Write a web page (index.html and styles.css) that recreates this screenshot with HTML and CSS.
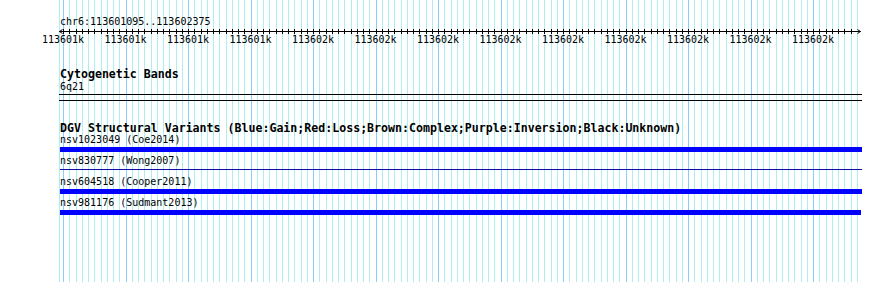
FILE: index.html
```html
<!DOCTYPE html>
<html>
<head>
<meta charset="utf-8">
<link rel="stylesheet" href="styles.css">
</head>
<body>
<div class="view">
  <div class="ruler-title">chr6:113601095..113602375</div>
  <div class="ruler">
    <svg class="arrow" width="4" height="6" viewBox="0 0 4 6"><path d="M3.5 1.5 L0.5 3.5 L3.5 5.5 M0 3.5 H4" /></svg>
    <div class="ruler-body"></div>
    <svg class="arrow" width="4" height="6" viewBox="0 0 4 6"><path d="M0 3.5 H3.5 M0.5 1.5 L3.5 3.5 L0.5 5.5" /></svg>
  </div>
  <div class="ruler-labels">
    <span>113601k</span><span>113601k</span><span>113601k</span><span>113601k</span><span>113602k</span><span>113602k</span><span>113602k</span><span>113602k</span><span>113602k</span><span>113602k</span><span>113602k</span><span>113602k</span><span>113602k</span>
  </div>

  <div class="track-title">Cytogenetic Bands</div>
  <div class="label">6q21</div>
  <div class="cytoband"></div>

  <div class="track-title dgv">DGV Structural Variants (Blue:Gain;Red:Loss;Brown:Complex;Purple:Inversion;Black:Unknown)</div>
  <div class="feature">
    <div class="label">nsv1023049 (Coe2014)</div>
    <div class="bar" style="width:802px"></div>
  </div>
  <div class="feature">
    <div class="label">nsv830777 (Wong2007)</div>
    <div class="bar thin" style="width:802px"></div>
  </div>
  <div class="feature">
    <div class="label">nsv604518 (Cooper2011)</div>
    <div class="bar" style="width:802px"></div>
  </div>
  <div class="feature">
    <div class="label">nsv981176 (Sudmant2013)</div>
    <div class="bar" style="width:801px"></div>
  </div>
</div>
</body>
</html>
```

FILE: styles.css
```css
html, body {
  margin: 0;
  padding: 0;
  background: #ffffff;
}

.view {
  box-sizing: border-box;
  min-height: 282px;
  padding: 15px 0 0 60px;
  font-family: "DejaVu Sans Mono", "Liberation Mono", monospace;
  font-size: 10px;
  color: #000;
  background-image:
    repeating-linear-gradient(to right,
      transparent 0 4px, #87cefa 4px 5px,
      transparent 5px 67px, #87cefa 67px 68px,
      transparent 68px 125px),
    repeating-linear-gradient(to right,
      transparent 0 4px, #afeeee 4px 5px,
      transparent 5px 10px, #afeeee 10px 11px,
      transparent 11px 17px, #afeeee 17px 18px,
      transparent 18px 23px, #afeeee 23px 24px,
      transparent 24px 25px),
    linear-gradient(#afeeee, #afeeee);
  background-position: 59px 0, 59px 0, 59px 0;
  background-size: 799px 100%, 799px 100%, 1px 100%;
  background-repeat: no-repeat;
}

.ruler-title {
  line-height: 13px;
  height: 13px;
  white-space: nowrap;
}

.ruler {
  display: flex;
  height: 6px;
  width: 802px;
  margin-left: -1px;
}

.arrow {
  display: block;
  flex: none;
}

.arrow path {
  fill: none;
  stroke: #000;
  stroke-width: 1;
}

.ruler-body {
  flex: 1;
  background-image:
    linear-gradient(#000, #000),
    repeating-linear-gradient(to right,
      #000 0 1px, transparent 1px 6px,
      #000 6px 7px, transparent 7px 13px,
      #000 13px 14px, transparent 14px 19px,
      #000 19px 20px, transparent 20px 25px);
  background-position: 0 3px, 0 1px;
  background-size: 100% 1px, 100% 5px;
  background-repeat: no-repeat;
}

.ruler-labels {
  display: flex;
  margin-left: -28.25px;
  line-height: 11px;
  height: 11px;
}

.ruler-labels span {
  flex: none;
  width: 62.5px;
  text-align: center;
  white-space: nowrap;
}

.track-title {
  margin-top: 22px;
  font-weight: bold;
  font-size: 11.6px;
  line-height: 14px;
  height: 14px;
  white-space: nowrap;
}

.track-title.dgv {
  margin-top: 21px;
  line-height: 12px;
  height: 12px;
}

.label {
  line-height: 11px;
  height: 11px;
  white-space: nowrap;
}

.cytoband {
  margin: 2px 0 0 -1px;
  width: 803px;
  height: 5px;
  border-top: 1px solid #000;
  border-bottom: 1px solid #000;
}

.bar {
  height: 5px;
  margin: 2px 0 3px;
  background: #0000ff;
}

.bar.thin {
  height: 1px;
  margin: 3px 0 6px;
  background: #0c0ca8;
}
```
